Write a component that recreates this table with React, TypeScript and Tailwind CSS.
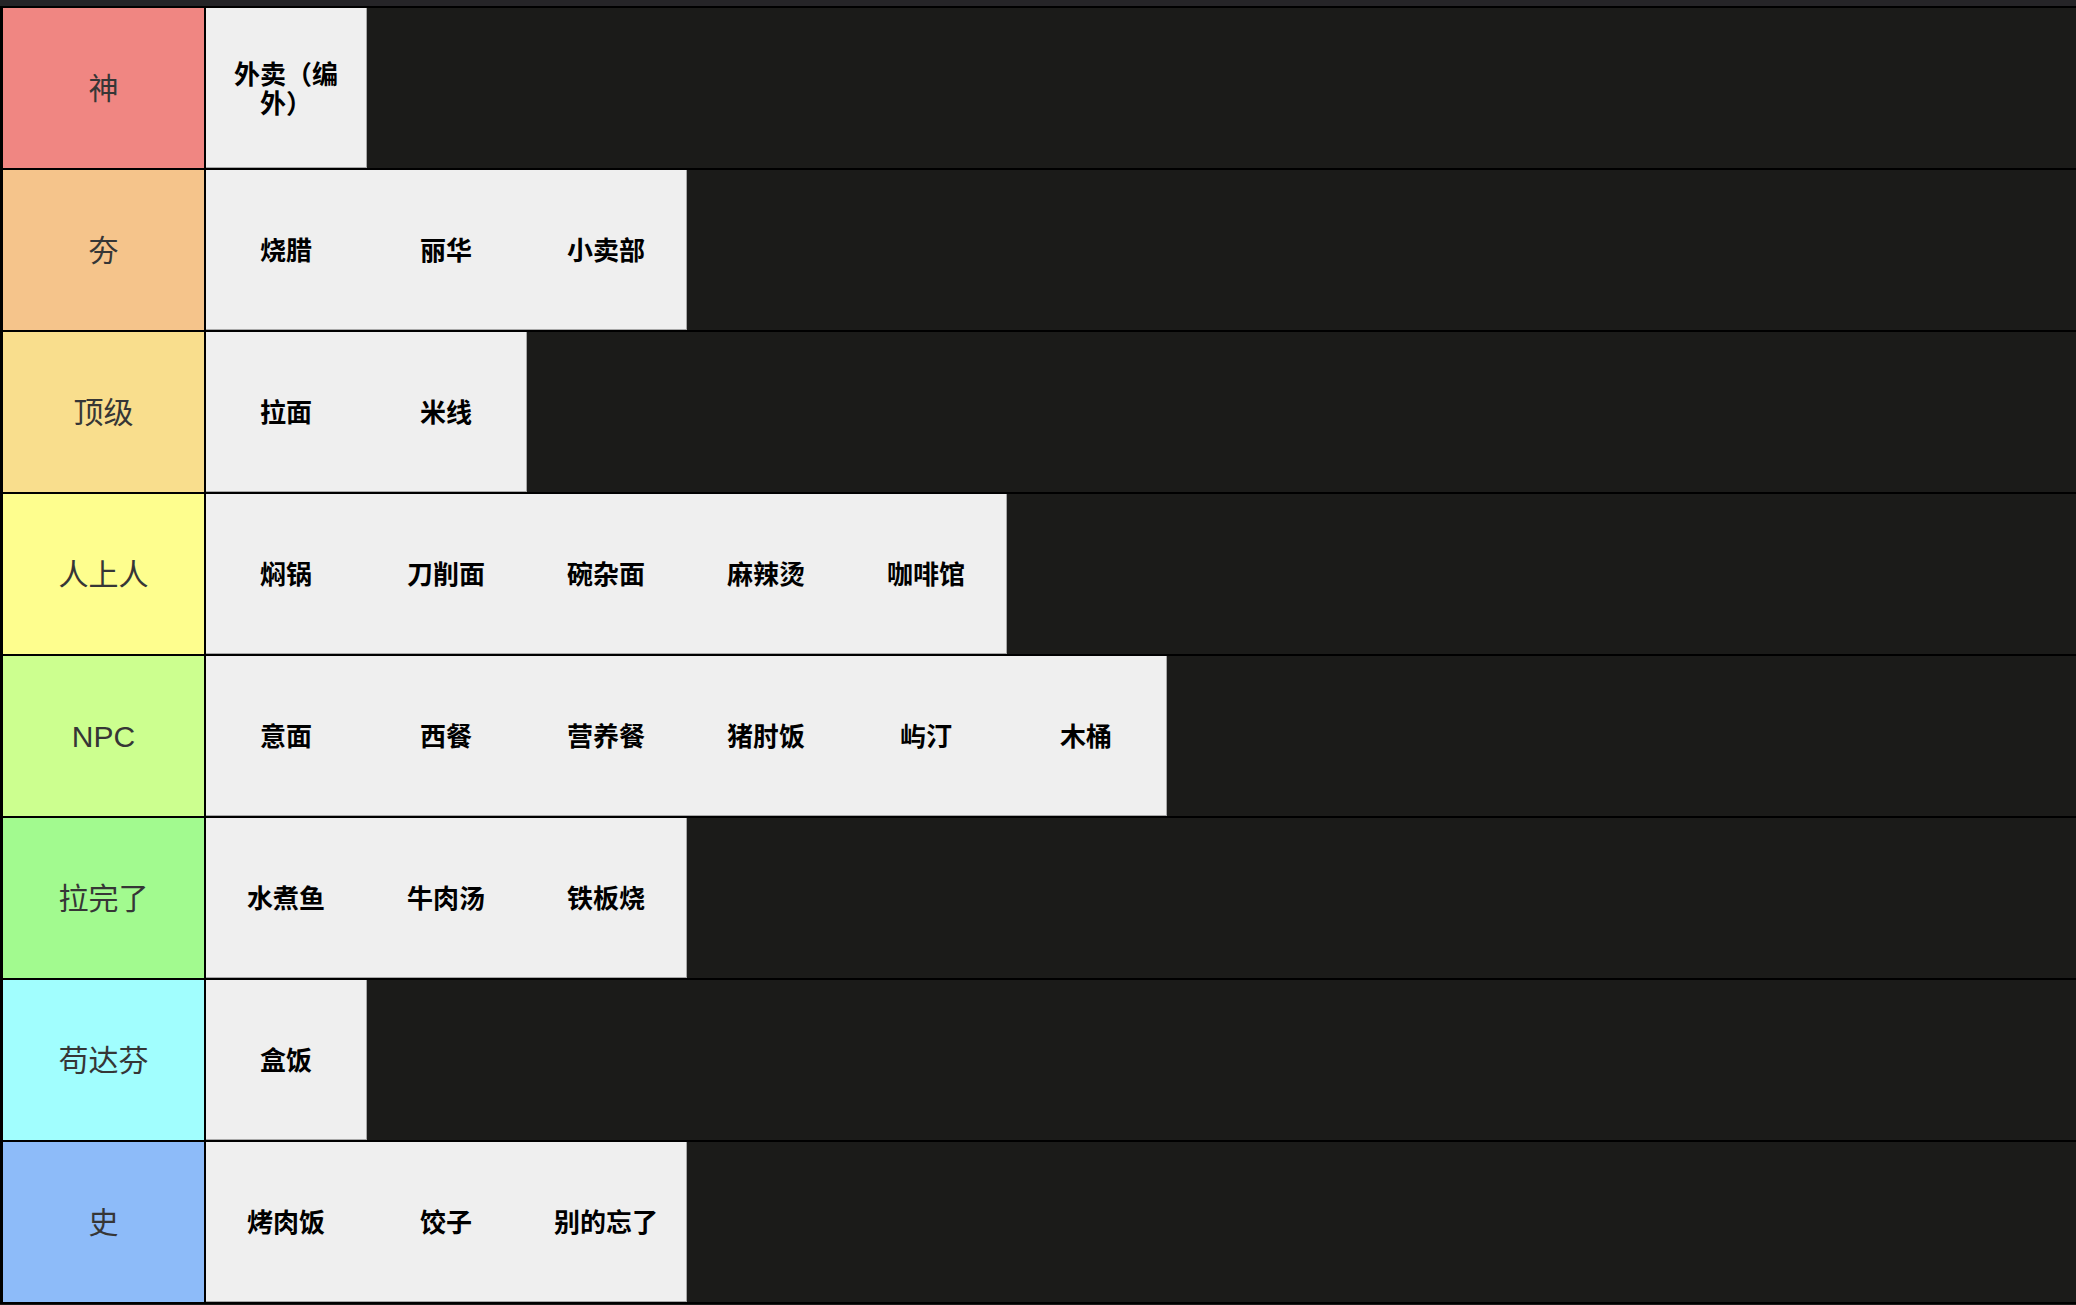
import React from 'react';

type Tier = { label: string; color: string; items: string[] };

const TIERS: Tier[] = [
  { label: '神', color: 'bg-[#f08682]', items: ['外卖（编外）'] },
  { label: '夯', color: 'bg-[#f5c48b]', items: ['烧腊', '丽华', '小卖部'] },
  { label: '顶级', color: 'bg-[#f9de8d]', items: ['拉面', '米线'] },
  { label: '人上人', color: 'bg-[#fefe8e]', items: ['焖锅', '刀削面', '碗杂面', '麻辣烫', '咖啡馆'] },
  { label: 'NPC', color: 'bg-[#ccff8f]', items: ['意面', '西餐', '营养餐', '猪肘饭', '屿汀', '木桶'] },
  { label: '拉完了', color: 'bg-[#a2fa8f]', items: ['水煮鱼', '牛肉汤', '铁板烧'] },
  { label: '苟达芬', color: 'bg-[#a1fefe]', items: ['盒饭'] },
  { label: '史', color: 'bg-[#8dbbf9]', items: ['烤肉饭', '饺子', '别的忘了'] },
];

function TierRow({ tier }: { tier: Tier }) {
  return (
    <div className="flex h-[162px] border-b-2 border-black">
      <div
        className={`w-[203px] shrink-0 flex items-center justify-center border-r-2 border-black text-[30px] text-[#363636] ${tier.color}`}
      >
        {tier.label}
      </div>
      <div className="flex border-r border-b border-[#a8a8a8]">
        {tier.items.map(item => (
          <div
            key={item}
            className="w-[160px] h-full bg-[#efefef] flex items-center justify-center px-6 pt-[5px] text-center text-[26px] leading-[1.12] font-bold text-black"
          >
            {item}
          </div>
        ))}
      </div>
    </div>
  );
}

export default function App() {
  return (
    <div
      className="w-[2076px] h-[1305px] bg-[#1b1b19] overflow-hidden"
      style={{ fontFamily: '"Liberation Sans", "Noto Sans CJK SC", sans-serif' }}
    >
      <div className="h-[6px] bg-[#252427]" />
      <div className="border-t-2 border-l-[3px] border-black">
        {TIERS.map(t => (
          <TierRow key={t.label} tier={t} />
        ))}
      </div>
    </div>
  );
}
